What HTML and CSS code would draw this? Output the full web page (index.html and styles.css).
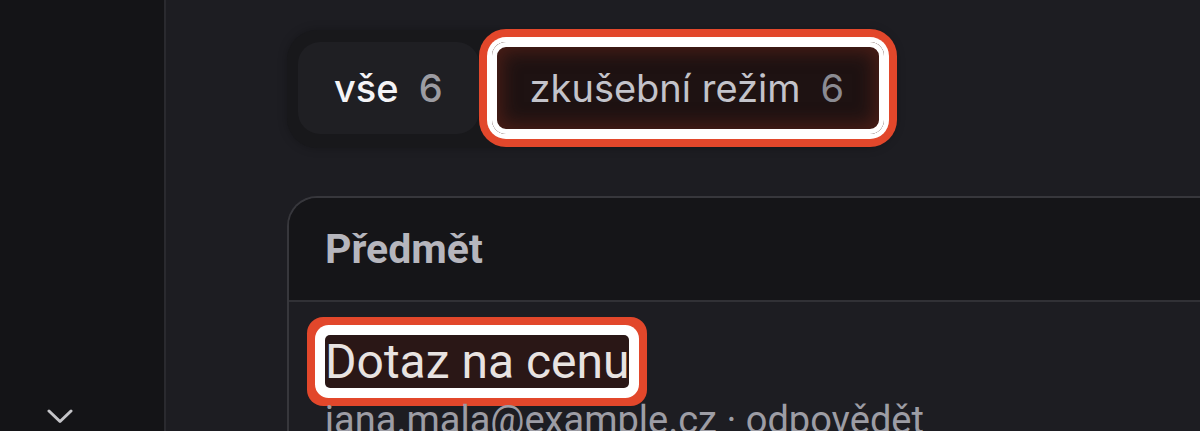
FILE: index.html
```html
<!DOCTYPE html>
<html lang="cs">
<head>
<meta charset="utf-8">
<title>Zprávy</title>
<link rel="stylesheet" href="styles.css">
</head>
<body>
  <aside class="sidebar">
    <button class="collapse" aria-label="Rozbalit">
      <svg width="26" height="15" viewBox="0 0 26 15"><polyline points="2,2 13,12.5 24,2" fill="none" stroke="currentColor" stroke-width="3" stroke-linecap="round" stroke-linejoin="round"/></svg>
    </button>
  </aside>
  <main class="content">
    <div class="tabs">
      <div class="tab tab-active"><span class="tab-label">vše</span><span class="tab-count">6</span></div>
      <div class="tab tab-marked"><span class="tab-label">zkušební režim</span><span class="tab-count">6</span></div>
    </div>
    <section class="card">
      <div class="card-head">Předmět</div>
      <div class="row">
        <span class="subject">Dotaz na cenu</span>
        <div class="meta">jana.mala@example.cz · odpovědět</div>
      </div>
    </section>
  </main>
</body>
</html>
```
FILE: styles.css
```css
* { box-sizing: border-box; }
html, body { margin: 0; height: 100%; }
body {
  display: flex;
  width: 1200px;
  height: 431px;
  overflow: hidden;
  background: #1d1d22;
  font-family: "Inter", "Noto Sans", sans-serif;
}
.sidebar {
  width: 166px;
  flex: none;
  background: #141417;
  border-right: 2px solid #2a2a2f;
  display: flex;
  flex-direction: column;
  justify-content: flex-end;
  padding: 0 0 7px 47px;
}
.collapse {
  background: none;
  border: 0;
  padding: 0;
  color: #c4c4c8;
  width: 26px;
  height: 15px;
  display: block;
}
.collapse svg { display: block; }
.content {
  flex: 1;
  min-width: 0;
  padding: 30px 0 0 121px;
  overflow: hidden;
}
.tabs {
  display: inline-flex;
  gap: 13px;
  padding: 12px 12px 14px 11px;
  background: #18181b;
  border-radius: 30px;
  box-shadow: 0 0 10px rgba(0,0,0,0.25);
}
.tab {
  height: 92px;
  display: flex;
  align-items: center;
  gap: 20px;
  padding: 0 36px;
  border-radius: 22px;
  font-size: 38px;
  letter-spacing: 0;
}
.tab-active {
  background: #1f1f23;
}
.tab-active .tab-label { color: #f4f4f6; font-weight: 500; }
.tab-active .tab-count { color: #9c9ca2; font-weight: 500; }
.tab-marked {
  padding: 0 40px 0 38px;
  border-radius: 14px;
  background: #1e1212;
  box-shadow:
    inset 0 0 0 5px #ffffff,
    inset 0 0 18px 10px rgba(110, 38, 26, 0.55),
    0 0 0 5px #ffffff,
    0 0 0 13px #e2472b;
}
.tab-marked .tab-label { color: #c3c3ca; }
.tab-marked .tab-count { color: #8b8b92; }
.card {
  margin-top: 48px;
  width: 1000px;
  border: 2px solid #37373c;
  border-right: 0;
  border-radius: 30px 0 0 0;
  font-family: "Roboto", "Liberation Sans", sans-serif;
}
.card-head {
  height: 104px;
  display: flex;
  align-items: center;
  padding-left: 36px;
  background: #151518;
  border-radius: 28px 0 0 0;
  border-bottom: 2px solid #313136;
  color: #b6b6bd;
  font-weight: 700;
  font-size: 41px;
}
.row {
  padding: 33px 0 0 36px;
}
.subject {
  display: inline-block;
  line-height: 53px;
  font-size: 48px;
  color: #e8e3e1;
  background: #2a1716;
  border-radius: 5px;
  box-shadow: 0 0 0 10px #ffffff, 0 0 0 18px #e2472b;
}
.meta {
  margin-top: 10px;
  font-size: 38px;
  color: #9d9da5;
  white-space: nowrap;
}
```
